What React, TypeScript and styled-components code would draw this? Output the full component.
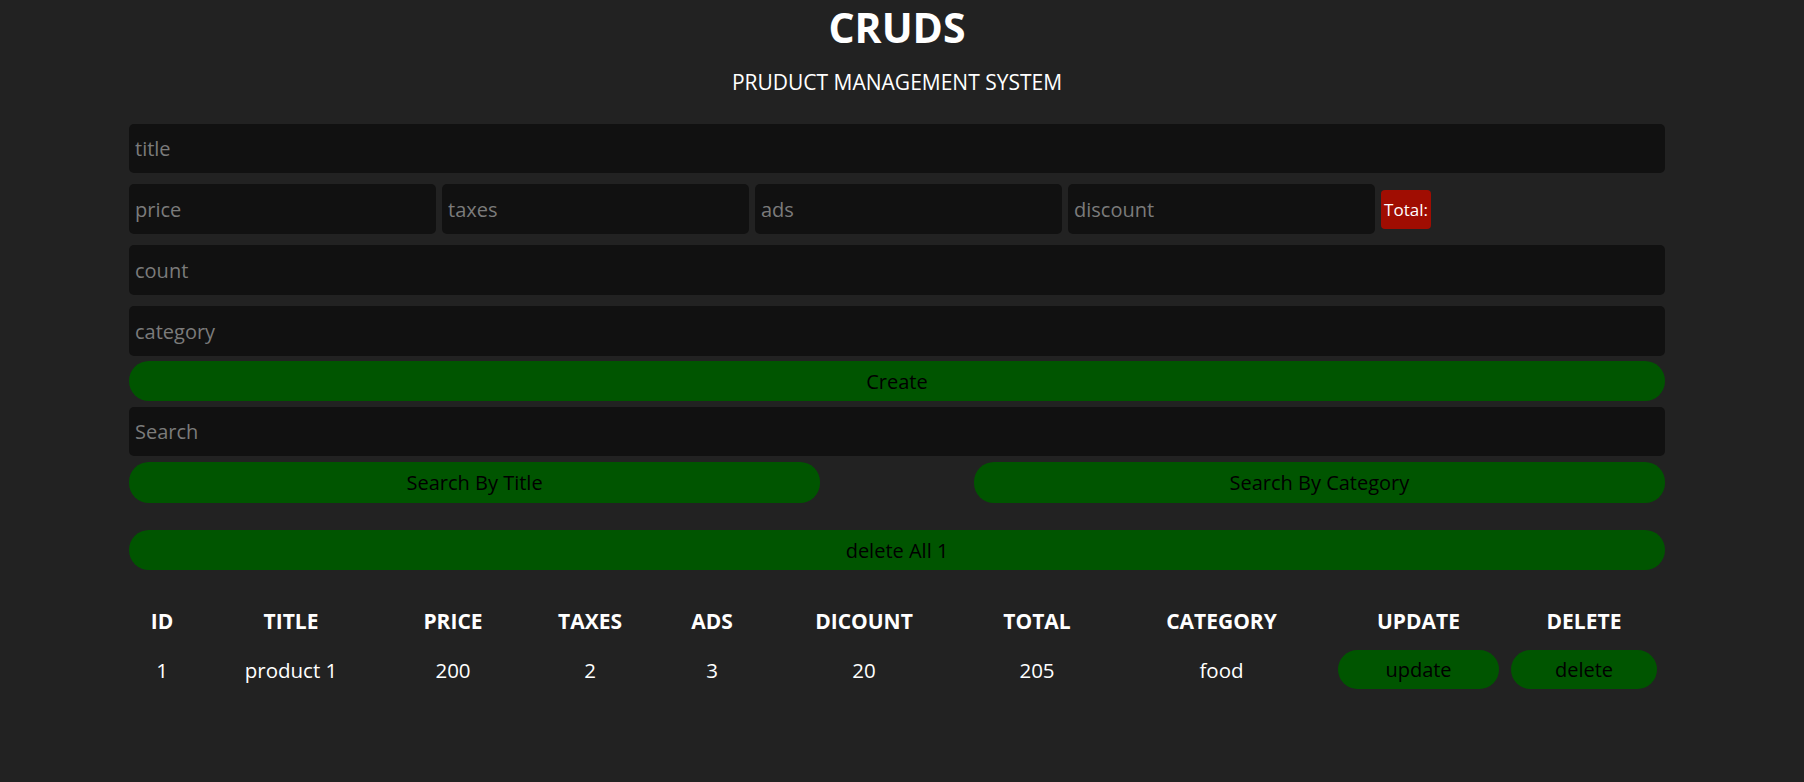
import React from 'react';
import styled, { createGlobalStyle } from 'styled-components';

const GlobalStyle = createGlobalStyle`
  html, body {
    margin: 0;
    padding: 0;
    background: #222;
    color: #fff;
    font-family: "Open Sans", "Noto Sans", sans-serif;
  }
  * {
    box-sizing: border-box;
  }
`;

const Page = styled.div`
  padding-right: 10px;
  min-height: 782px;
`;

const Crud = styled.div`
  width: 1536px;
  margin: 0 auto;
  display: flex;
  flex-direction: column;
`;

const Head = styled.header`
  display: flex;
  flex-direction: column;
  align-items: center;
  padding-top: 3px;
  height: 124px;
`;

const Title = styled.h2`
  margin: 0;
  font-size: 41px;
  font-weight: 700;
  line-height: 48px;
  text-transform: uppercase;
`;

const Subtitle = styled.p`
  margin: 17px 0 0;
  font-size: 21px;
  line-height: 28px;
  text-transform: uppercase;
`;

const Inputs = styled.div`
  display: flex;
  flex-direction: column;
  gap: 11px;
`;

const Field = styled.input<{ $grow?: boolean; $h?: number }>`
  width: ${({ $grow }) => ($grow ? '307px' : '100%')};
  height: ${({ $h }) => $h ?? 49}px;
  border: none;
  outline: none;
  border-radius: 5px;
  background: #111;
  color: #fff;
  padding: 0 6px;
  font-family: inherit;
  font-size: 20px;

  &::placeholder {
    color: #7b7b7b;
  }
`;

const PriceRow = styled.div`
  display: flex;
  align-items: center;
  gap: 6px;
  height: 50px;
`;

const Total = styled.small`
  display: inline-flex;
  align-items: center;
  justify-content: center;
  width: 50px;
  height: 39px;
  background: #a00d02;
  border-radius: 4px;
  font-size: 17px;
  color: #fff;
`;

const GreenButton = styled.button<{ $mt?: number }>`
  width: 100%;
  height: 40px;
  margin-top: ${({ $mt }) => $mt ?? 0}px;
  border: none;
  border-radius: 20px;
  background: #005500;
  color: #000;
  font-family: inherit;
  font-size: 20px;
  cursor: pointer;
`;

const SearchField = styled(Field)`
  margin-top: 6px;
`;

const SearchButtons = styled.div`
  display: flex;
  justify-content: space-between;
  margin-top: 6px;

  ${GreenButton} {
    width: 45%;
    height: 41px;
  }
`;

const Table = styled.table`
  width: 100%;
  margin-top: 35px;
  border-collapse: collapse;
  table-layout: fixed;
  text-align: center;
`;

const Th = styled.th`
  padding: 2px 0 11px;
  font-size: 21px;
  font-weight: 700;
  line-height: 28px;
  text-transform: uppercase;
`;

const Td = styled.td`
  padding: 4px 0;
  font-size: 20.5px;
  line-height: 28px;
  vertical-align: middle;
`;

const RowButton = styled.button<{ $w: number }>`
  display: block;
  width: ${({ $w }) => $w}px;
  height: 39px;
  margin: 0 auto;
  border: none;
  border-radius: 20px;
  background: #005500;
  color: #000;
  font-family: inherit;
  font-size: 20px;
  cursor: pointer;
`;

const columns: [string, number][] = [
  ['id', 66],
  ['title', 192],
  ['price', 132],
  ['taxes', 142],
  ['ads', 102],
  ['dicount', 202],
  ['total', 144],
  ['category', 225],
  ['update', 169],
  ['delete', 162],
];

const products = [
  { id: 1, title: 'product 1', price: 200, taxes: 2, ads: 3, discount: 20, total: 205, category: 'food' },
];

const App: React.FC = () => {
  return (
    <Page>
      <GlobalStyle />
      <Crud>
        <Head>
          <Title>cruds</Title>
          <Subtitle>pruduct management system</Subtitle>
        </Head>

        <Inputs>
          <Field type="text" placeholder="title" />
          <PriceRow>
            <Field $grow $h={50} type="number" placeholder="price" />
            <Field $grow $h={50} type="number" placeholder="taxes" />
            <Field $grow $h={50} type="number" placeholder="ads" />
            <Field $grow $h={50} type="number" placeholder="discount" />
            <Total>Total:</Total>
          </PriceRow>
          <Field $h={50} type="number" placeholder="count" />
          <Field $h={50} type="text" placeholder="category" />
        </Inputs>
        <GreenButton $mt={5}>Create</GreenButton>

        <SearchField type="text" placeholder="Search" />
        <SearchButtons>
          <GreenButton>Search By Title</GreenButton>
          <GreenButton>Search By Category</GreenButton>
        </SearchButtons>
        <GreenButton $mt={27}>delete All {products.length}</GreenButton>

        <Table>
          <colgroup>
            {columns.map(([key, w]) => (
              <col key={key} style={{ width: w }} />
            ))}
          </colgroup>
          <thead>
            <tr>
              {columns.map(([key]) => (
                <Th key={key}>{key}</Th>
              ))}
            </tr>
          </thead>
          <tbody>
            {products.map((p) => (
              <tr key={p.id}>
                <Td>{p.id}</Td>
                <Td>{p.title}</Td>
                <Td>{p.price}</Td>
                <Td>{p.taxes}</Td>
                <Td>{p.ads}</Td>
                <Td>{p.discount}</Td>
                <Td>{p.total}</Td>
                <Td>{p.category}</Td>
                <Td><RowButton $w={161}>update</RowButton></Td>
                <Td><RowButton $w={146}>delete</RowButton></Td>
              </tr>
            ))}
          </tbody>
        </Table>
      </Crud>
    </Page>
  );
};

export default App;
